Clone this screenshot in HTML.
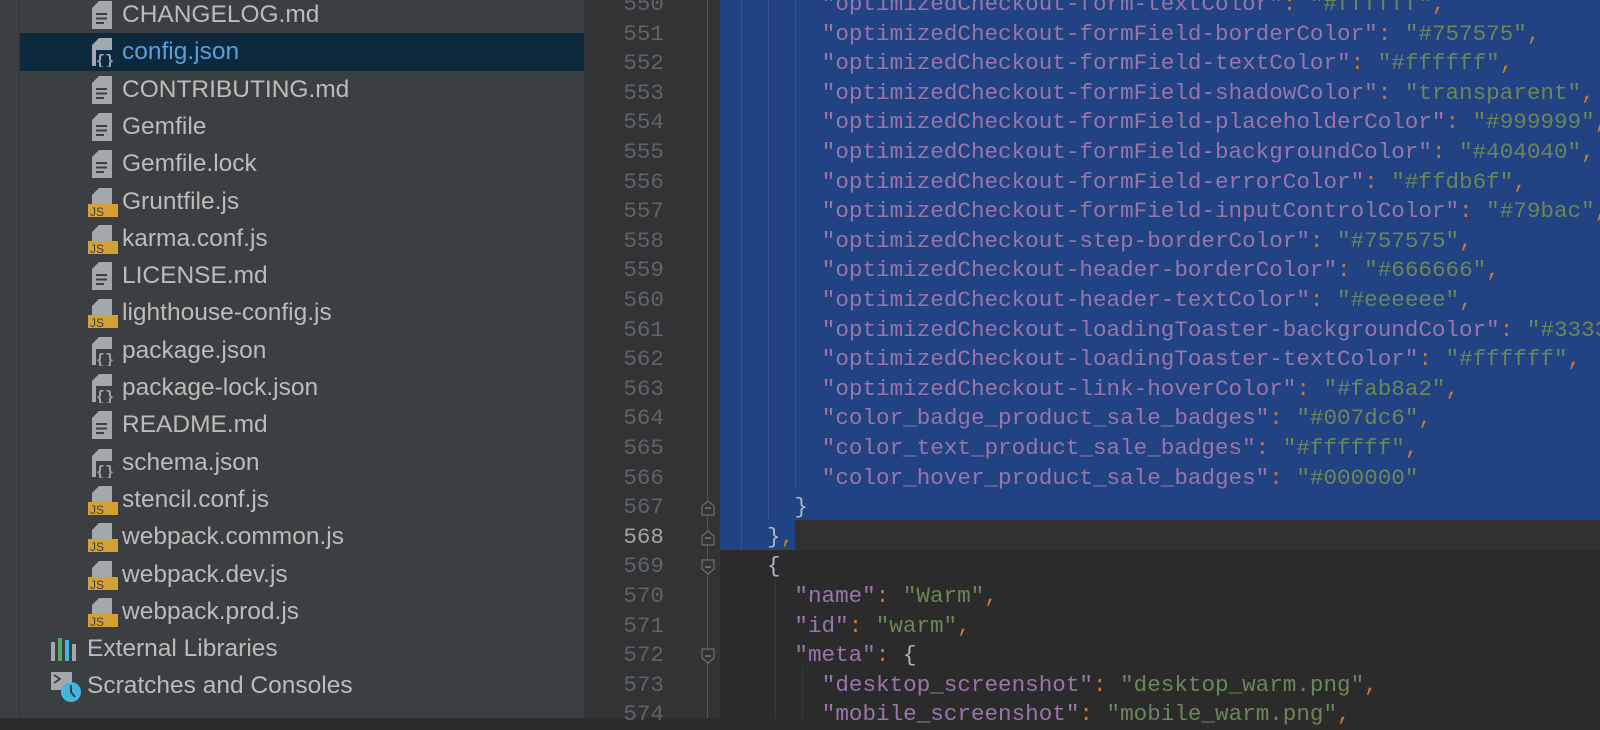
<!DOCTYPE html>
<html><head><meta charset="utf-8"><style>
*{margin:0;padding:0;box-sizing:border-box}
body{width:1600px;height:718px;overflow:hidden;background:#2b2b2b;position:relative;font-family:"Liberation Sans",sans-serif}
#side{position:absolute;left:0;top:0;width:584px;height:718px;background:#3c3f41;border-left:20px solid #3c3f41}
#side .strip{position:absolute;left:-1px;top:0;width:1px;height:718px;background:#323232}
.row{position:absolute;left:0;width:564px;height:37.3px;line-height:37.3px;font-size:24.5px;color:#bbbbbb;white-space:nowrap}
.row.sel{background:#0d293e;color:#5a9fd8}
.row .t{position:absolute;left:102px}
.ic{position:absolute;left:66px;top:4px;width:32px;height:30px}
#gut{position:absolute;left:584px;top:0;width:136px;height:718px;background:#313335}
.ln{position:absolute;left:584px;width:80px;text-align:right;font-family:"Liberation Mono",monospace;font-size:22.6px;color:#606366;height:29.6px;line-height:29.6px}
.code{position:absolute;left:767px;font-family:"Liberation Mono",monospace;font-size:22.6px;height:29.6px;line-height:29.6px;white-space:pre;color:#a9b7c6}
.k{color:#9876aa}.s{color:#6a8759}.p{color:#cc7832}
#selbg{position:absolute;left:720px;top:-10px;width:880px;height:530px;background:#214283}
#sel2{position:absolute;left:720px;top:520px;width:75px;height:29.6px;background:#214283}
#cur{position:absolute;left:795px;top:520px;width:805px;height:29.6px;background:#323232}
.fold{position:absolute;left:701px;width:14px;height:16px}
.gl{position:absolute;width:1px;background:#3b4f8a}
</style></head><body>
<div id="side"><div class="strip"></div></div>
<div id="gut"></div>
<div style="position:absolute;left:707px;top:0;width:1px;height:718px;background:#555"></div>
<div id="selbg"></div><div id="sel2"></div><div id="cur"></div>
<div class="gl" style="left:741px;top:0;height:550px"></div>
<div class="gl" style="left:768px;top:0;height:520px"></div>
<div class="gl" style="left:795px;top:0;height:490px"></div>
<div class="gl" style="left:775px;top:580px;height:138px;background:#393939"></div>
<div class="gl" style="left:802px;top:668px;height:50px;background:#393939"></div>

<div id="rows"></div>
<div id="code"></div>
<script>
(function(){
var items=[["CHANGELOG.md","t"],["config.json","j"],["CONTRIBUTING.md","t"],["Gemfile","t"],["Gemfile.lock","t"],["Gruntfile.js","js"],["karma.conf.js","js"],["LICENSE.md","t"],["lighthouse-config.js","js"],["package.json","j"],["package-lock.json","j"],["README.md","t"],["schema.json","j"],["stencil.conf.js","js"],["webpack.common.js","js"],["webpack.dev.js","js"],["webpack.prod.js","js"]];
var h="";
function icon(k,sel){
 var bg=sel?'#0d293e':'#3c3f41';
 var s='<svg class="ic" viewBox="0 0 32 30"><path d="M6 1 L26 1 L26 29 L6 29 Z" fill="#a2a8ad"/><path d="M6 0 L13 0 L6 7 Z" fill="'+bg+'"/><path d="M5 8 L13 0" stroke="'+bg+'" stroke-width="1.5"/><path d="M13 1 V8 H6" stroke="'+bg+'" stroke-width="0" fill="none"/>';
 if(k=="t")s+='<rect x="10" y="13" width="11" height="2" fill="'+bg+'"/><rect x="10" y="17.5" width="11" height="2" fill="'+bg+'"/><rect x="10" y="22" width="8" height="2" fill="'+bg+'"/>';
 if(k=="j")s+='<rect x="10" y="13" width="20" height="17" fill="'+bg+'"/><text x="10" y="28" font-family="Liberation Mono" font-size="15" font-weight="bold" fill="#a2a8ad">{}</text>';
 if(k=="js")s+='<rect x="2" y="17" width="30" height="13" fill="#d4a134"/><text x="4" y="29" font-family="Liberation Sans" font-size="12" fill="#3c3f41">JS</text>';
 return s+'</svg>';
}
for(var i=0;i<items.length;i++){
 var yy=-4+i*37.3;
 h+='<div class="row'+(i==1?' sel':'')+'" style="left:20px;top:'+yy+'px">'+icon(items[i][1],i==1)+'<span class="t">'+items[i][0]+'</span></div>';
}
var t=-4+17*37.3;
h+='<div class="row" style="left:20px;top:'+t+'px"><svg style="position:absolute;left:30px;top:7px" width="26" height="24"><rect x="1" y="5" width="4" height="19" fill="#a2a8ad"/><rect x="8" y="1" width="4" height="23" fill="#59a869"/><rect x="15" y="3" width="4" height="21" fill="#40b6e0"/><rect x="22" y="7" width="4" height="17" fill="#a2a8ad"/></svg><span class="t" style="left:67px">External Libraries</span></div>';
t+=37.3;
h+='<div class="row" style="left:20px;top:'+t+'px"><svg style="position:absolute;left:30px;top:4px" width="32" height="32"><rect x="1" y="1" width="21" height="18" fill="#a2a8ad"/><path d="M4 4 L10 8 L4 12" stroke="#3c3f41" stroke-width="1.8" fill="none"/><circle cx="21" cy="21" r="10" fill="#40b6e0"/><path d="M21 14 V21 L25 26" stroke="#3c3f41" stroke-width="2" fill="none"/></svg><span class="t" style="left:67px">Scratches and Consoles</span></div>';
document.getElementById("rows").innerHTML=h;

var L=[
[2,'k','"optimizedCheckout-form-textColor"','#ffffff',1],
[2,'k','"optimizedCheckout-formField-borderColor"','#757575',1],
[2,'k','"optimizedCheckout-formField-textColor"','#ffffff',1],
[2,'k','"optimizedCheckout-formField-shadowColor"','transparent',1],
[2,'k','"optimizedCheckout-formField-placeholderColor"','#999999',1],
[2,'k','"optimizedCheckout-formField-backgroundColor"','#404040',1],
[2,'k','"optimizedCheckout-formField-errorColor"','#ffdb6f',1],
[2,'k','"optimizedCheckout-formField-inputControlColor"','#79bac',1],
[2,'k','"optimizedCheckout-step-borderColor"','#757575',1],
[2,'k','"optimizedCheckout-header-borderColor"','#666666',1],
[2,'k','"optimizedCheckout-header-textColor"','#eeeeee',1],
[2,'k','"optimizedCheckout-loadingToaster-backgroundColor"','#333333',1],
[2,'k','"optimizedCheckout-loadingToaster-textColor"','#ffffff',1],
[2,'k','"optimizedCheckout-link-hoverColor"','#fab8a2',1],
[2,'k','"color_badge_product_sale_badges"','#007dc6',1],
[2,'k','"color_text_product_sale_badges"','#ffffff',1],
[2,'k','"color_hover_product_sale_badges"','#000000',0],
[1,'b','}'],
[0,'b','},'],
[0,'b','{'],
[1,'k','"name"','Warm',1],
[1,'k','"id"','warm',1],
[1,'m','"meta"'],
[2,'k','"desktop_screenshot"','desktop_warm.png',1],
[2,'k','"mobile_screenshot"','mobile_warm.png',1]
];
var c="";
for(var i=0;i<L.length;i++){
 var n=550+i, yy=-10+i*29.6, l=L[i];
 c+='<div class="ln" style="top:'+yy+'px;'+(n==568?'color:#a4a3a3':'')+'">'+n+'</div>';
 var x=767+l[0]*27.4, s='';
 if(l[1]=='k')s='<span class="k">'+l[2]+'</span><span class="p">:</span> <span class="s">"'+l[3]+'"</span>'+(l[4]?'<span class="p">,</span>':'');
 else if(l[1]=='m')s='<span class="k">'+l[2]+'</span><span class="p">:</span> {';
 else s=l[2]=='},'?'}<span class="p">,</span>':l[2];
 c+='<div class="code" style="left:'+x+'px;top:'+yy+'px">'+s+'</div>';
}
var f=[[567,'up'],[568,'up'],[569,'dn'],[572,'dn']];
for(var j=0;j<f.length;j++){
 var tp=-10+(f[j][0]-550)*29.6+7;
 var d=f[j][1]=='up'?'M1 15 V6 L7 1 L13 6 V15 Z':'M1 1 V10 L7 15 L13 10 V1 Z';
 c+='<svg class="fold" style="top:'+tp+'px" viewBox="0 0 14 16"><path d="'+d+'" fill="#313335" stroke="#6e6e6e" stroke-width="1.2"/><path d="M4 8 H10" stroke="#8a8a8a" stroke-width="1.2"/></svg>';
}
document.getElementById("code").innerHTML=c;
})();
</script>
</body></html>
